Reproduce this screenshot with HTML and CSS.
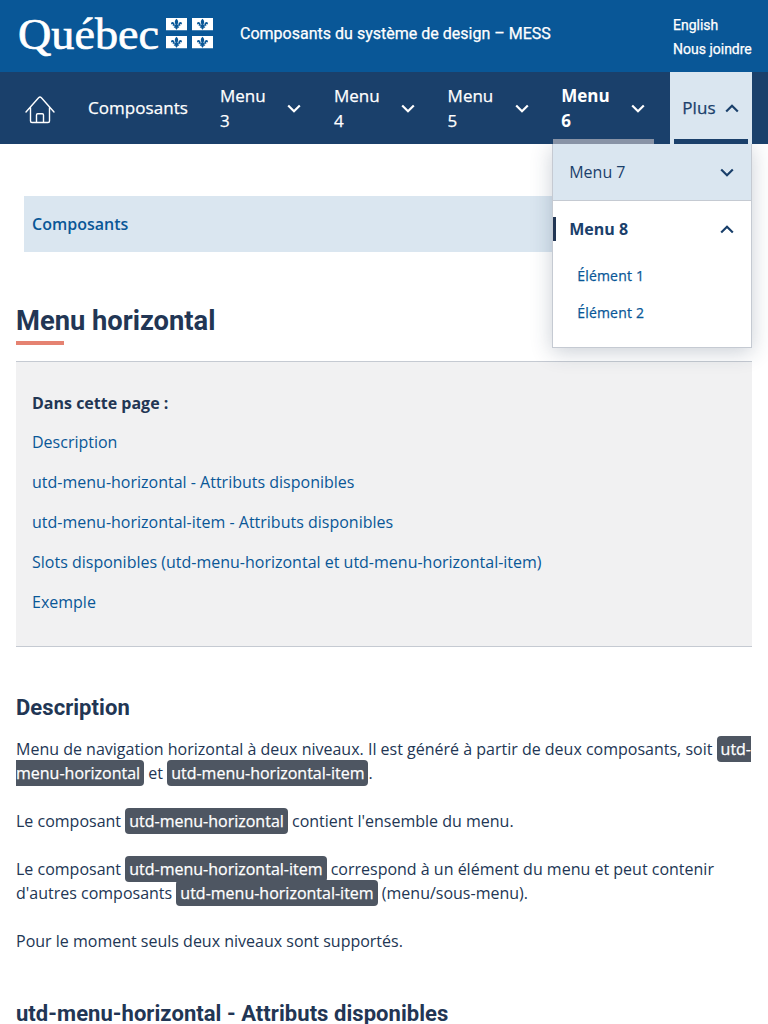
FILE: index.html
```
<!DOCTYPE html>
<html lang="fr">
<head>
<meta charset="utf-8">
<title>Menu horizontal</title>
<link rel="stylesheet" href="styles.css">
</head>
<body>
<svg class="defs" width="0" height="0" aria-hidden="true">
  <symbol id="chevron" viewBox="0 0 14 9"><path d="M1.2 1.5 7 7.2l5.800-5.700" fill="none" stroke="currentColor" stroke-width="2.200"/></symbol>
  <symbol id="lys" viewBox="0 0 21 12.500"><path fill="#fff" d="M0 0h21v12.500H0z"/><path fill="#095797" d="M10.500.8c1 1 1.700 2.100 1.700 3.200 0 1-.5 1.700-.7 2.900h.8c0-1.600.9-3 2.200-3 1.200 0 2 1.400 1 2.600-.4-.7-1-.8-1.300-.2-.2.500 0 1.100.3 1.500h-2.400c.1.900.7 1.200 1.300 1-.2.900-1 1.100-1.600.7-.1.900-.6 1.600-1.300 2.200-.7-.6-1.200-1.300-1.300-2.200-.6.400-1.400.2-1.600-.7.600.2 1.200-.1 1.300-1H6.500c.3-.4.500-1 .3-1.500-.3-.6-.9-.5-1.300.2-1-1.200-.2-2.600 1-2.600 1.300 0 2.200 1.400 2.200 3h.8c-.2-1.200-.7-1.900-.7-2.900 0-1.100.7-2.200 1.700-3.200z"/></symbol>
</svg>
<header class="banner">
  <svg class="logo" width="200" height="48" viewBox="0 0 200 48">
    <text class="logo-text" x="2" y="36.500" textLength="141" lengthAdjust="spacingAndGlyphs">Québec</text>
    <use href="#lys" x="150" y="6" width="21" height="12.500"/>
    <use href="#lys" x="176" y="6" width="21" height="12.500"/>
    <use href="#lys" x="150" y="24" width="21" height="12.500"/>
    <use href="#lys" x="176" y="24" width="21" height="12.500"/>
  </svg>
  <div class="site-name">Composants du système de design – MESS</div>
  <div class="links"><a>English</a><a>Nous joindre</a></div>
</header>
<nav class="nav">
  <a class="home"><svg width="30" height="28" viewBox="0 0 30 28" fill="none" stroke="#fff" stroke-width="1.400" stroke-linecap="round" stroke-linejoin="round"><path d="M1 16 13.600 1.700q1.400-1.400 2.800 0L29 16M5.500 11.500v13.500q0 1.500 1.500 1.500h16q1.500 0 1.500-1.500V11.500M11.500 26V19q0-1.200 1.200-1.200h4.600q1.200 0 1.200 1.200v7"/></svg></a>
  <a class="composants">Composants</a>
  <a class="item m3"><span>Menu<br>3</span><svg class="chev"><use href="#chevron"/></svg></a>
  <a class="item m4"><span>Menu<br>4</span><svg class="chev"><use href="#chevron"/></svg></a>
  <a class="item m5"><span>Menu<br>5</span><svg class="chev"><use href="#chevron"/></svg></a>
  <a class="item m6 current"><span>Menu<br>6</span><svg class="chev"><use href="#chevron"/></svg></a>
  <div class="plus"><span class="plus-label">Plus</span><svg class="chev up"><use href="#chevron"/></svg>
    <div class="dropdown">
      <div class="row shaded"><span>Menu 7</span><svg class="chev"><use href="#chevron"/></svg></div>
      <div class="row active"><span>Menu 8</span><svg class="chev up"><use href="#chevron"/></svg></div>
      <div class="sub"><a>Élément 1</a><a>Élément 2</a></div>
    </div>
  </div>
</nav>
<main>
  <div class="crumb">Composants</div>
  <h1>Menu horizontal</h1>
  <section class="toc">
    <strong>Dans cette page :</strong>
    <a>Description</a>
    <a>utd-menu-horizontal - Attributs disponibles</a>
    <a>utd-menu-horizontal-item - Attributs disponibles</a>
    <a>Slots disponibles (utd-menu-horizontal et utd-menu-horizontal-item)</a>
    <a>Exemple</a>
  </section>
  <h2>Description</h2>
  <p>Menu de navigation horizontal à deux niveaux. Il est généré à partir de deux composants, soit <code>utd-menu-horizontal</code> et <code>utd-menu-horizontal-item</code>.</p>
  <p>Le composant <code>utd-menu-horizontal</code> contient l'ensemble du menu.</p>
  <p>Le composant <code>utd-menu-horizontal-item</code> correspond à un élément du menu et peut contenir d'autres composants <code>utd-menu-horizontal-item</code> (menu/sous-menu).</p>
  <p>Pour le moment seuls deux niveaux sont supportés.</p>
  <h2 class="next">utd-menu-horizontal - Attributs disponibles</h2>
</main>
</body>
</html>
```
FILE: styles.css
```
* { box-sizing: border-box; }
html, body { height: 1024px; overflow: hidden; }
body { margin: 0; font: 400 16px/24px "Open Sans", sans-serif; color: #223654; background: #fff; }
.defs { position: absolute; }
.banner { height: 72px; background: #095797; color: #fff; display: flex; align-items: flex-start; padding: 12px 16px; font-family: Roboto, sans-serif; -webkit-text-stroke: .25px #fff; }
.logo { flex: none; overflow: visible; }
.logo-text { font: 45px "Liberation Serif", serif; fill: #fff; stroke: #fff; stroke-width: .7px; }
.site-name { margin: 10px 0 0 24px; font-weight: 400; letter-spacing: .01px; flex: 1; }
.links { display: flex; flex-direction: column; width: 79px; font-size: 14px; font-weight: 400; white-space: nowrap; margin-top: 1px; }
.nav { height: 72px; background: #1a406b; color: #fff; display: flex; align-items: stretch; padding-left: 25px; font-size: 17px; line-height: 25px; font-weight: 500; }
.composants, .item:not(.current) span, .plus-label, .sub a, code { -webkit-text-stroke: .25px currentColor; }
.home { width: 63px; padding-top: 24px; }
.home svg { display: block; }
.composants { width: 132px; padding-top: 23px; letter-spacing: .06px; }
.chev { width: 14px; height: 9px; flex: none; display: block; }
.up { transform: rotate(180deg); }
.item { display: flex; align-items: center; justify-content: space-between; width: 81px; margin-right: 33px; }
.m4, .m5 { margin-right: 32.600px; }
.m6 { width: 101px; margin: 0 16px 0 -8px; padding: 0 9px 0 8px; }
.current { font-weight: 700; background: linear-gradient(#8893a6, #8893a6) bottom / 100% 5px no-repeat; }
.plus { position: relative; width: 82px; background: linear-gradient(#1a406b, #1a406b) 4px 100% / 74px 5px no-repeat #dae6f0; color: #1a406b; display: flex; align-items: center; justify-content: space-between; padding: 0 13px 0 12px; }
.plus-label { padding-bottom: 2px; letter-spacing: .15px; }
.dropdown { position: absolute; top: 72px; right: 0; width: 200px; height: 204px; background: #fff; border: 1px solid #c5cad2; border-top: 0; box-shadow: 0 4px 20px rgba(34,54,84,.24); clip-path: inset(0 -40px -40px -40px); font-size: 16px; }
.row { height: 57px; display: flex; align-items: center; justify-content: space-between; padding: 0 17px 0 16px; }
.shaded { background: #dae6f0; border-bottom: 1px solid #c5cad2; font-weight: 400; }
.active { font-weight: 700; background: linear-gradient(#223654, #223654) left 16px / 3px 24px no-repeat; }
.sub { padding: 5px 24px; display: flex; flex-direction: column; gap: 12px; font-size: 14px; font-weight: 500; letter-spacing: .2px; color: #095797; }
main { padding: 52px 16px 0; }
.crumb { margin-left: 8px; height: 56px; background: #dae6f0; padding: 16px 8px; color: #095797; font-weight: 600; }
h1, h2 { font-family: Roboto, sans-serif; font-weight: 700; margin: 0; }
h1 { font-size: 27.300px; line-height: 32px; margin-top: 53px; height: 40px; background: linear-gradient(#e58271, #e58271) left bottom / 48px 4px no-repeat; }
.toc { margin-top: 16px; height: 286px; background: #f1f1f2; border: solid #c5cad2; border-width: 1px 0; padding: 29px 16px; display: flex; flex-direction: column; gap: 16px; }
.toc strong { margin-bottom: -1px; }
.toc a { color: #095797; }
h2 { font-size: 22px; letter-spacing: .05px; line-height: 28px; margin: 47px 0 15px; }
p { margin: 0 0 24px; }
code { font: 500 16px "Open Sans", sans-serif; color: #fff; background: #4e5662; border-radius: 4px; padding: 2px 4px; }
.next { margin-top: 47px; }
```
